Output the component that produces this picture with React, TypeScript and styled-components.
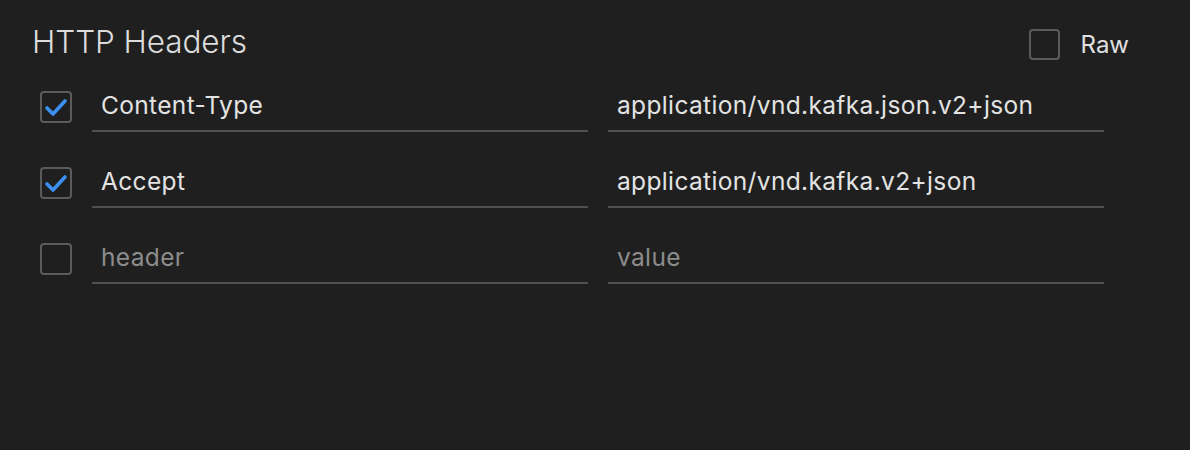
import React from "react";
import styled, { createGlobalStyle } from "styled-components";

const Global = createGlobalStyle`
  html, body { margin: 0; padding: 0; background: #1f1f1f; }
  body { font-family: Inter, "Noto Sans", sans-serif; color: #e3e3e3; }
`;

const Page = styled.div`
  width: 1190px;
  height: 450px;
  box-sizing: border-box;
  padding: 22px 0 0 32px;
  background: #1f1f1f;
`;

const Header = styled.div`
  display: flex;
  align-items: center;
  justify-content: space-between;
  width: 1098px;
  height: 44px;
`;

const Title = styled.h1`
  margin: 0 0 6px 0;
  font-size: 31.5px;
  font-weight: 300;
  color: #dcdcdc;
  letter-spacing: -0.1px;
`;

const RawToggle = styled.label`
  display: flex;
  align-items: center;
  gap: 21px;
  margin-right: 1px;
  font-size: 24px;
  color: #e0e0e0;
`;

const Box = styled.span<{ $size: number }>`
  display: inline-flex;
  align-items: center;
  justify-content: center;
  width: ${(p) => p.$size}px;
  height: ${(p) => p.$size}px;
  box-sizing: border-box;
  border: 2px solid #5b5b5b;
  border-radius: 4px;
  flex: none;
`;

const RowBox = styled(Box)`
  margin-top: 25px;
`;

const Rows = styled.div`
  display: flex;
  flex-direction: column;
  padding-left: 8px;
`;

const Row = styled.div`
  display: flex;
  align-items: flex-start;
  height: 76px;
`;

const Fields = styled.div`
  display: flex;
  gap: 20px;
  margin-left: 20px;
`;

const Field = styled.div<{ $placeholder?: boolean }>`
  width: 496px;
  height: 46px;
  margin-top: 20px;
  box-sizing: border-box;
  border-bottom: 2px solid #505050;
  padding: 0 0 6px 9px;
  display: flex;
  align-items: center;
  font-size: 24.5px;
  letter-spacing: 0.35px;
  color: ${(p) => (p.$placeholder ? "#8c8c8c" : "#e3e3e3")};
`;

const Check = () => (
  <svg width="24" height="19" viewBox="0 0 24 19">
    <path d="M3 10 L9 16 L21 3" fill="none" stroke="#3c8ff3" strokeWidth="3.6" strokeLinecap="round" strokeLinejoin="round" />
  </svg>
);

const rows = [
  { on: true, k: "Content-Type", v: "application/vnd.kafka.json.v2+json" },
  { on: true, k: "Accept", v: "application/vnd.kafka.v2+json" },
  { on: false, k: "header", v: "value", ph: true },
];

export default function App() {
  return (
    <Page>
      <Global />
      <Header>
        <Title>HTTP Headers</Title>
        <RawToggle>
          <Box $size={31} />
          Raw
        </RawToggle>
      </Header>
      <Rows>
        {rows.map((r) => (
          <Row key={r.k}>
            <RowBox $size={32}>{r.on && <Check />}</RowBox>
            <Fields>
              <Field $placeholder={r.ph}>{r.k}</Field>
              <Field $placeholder={r.ph}>{r.v}</Field>
            </Fields>
          </Row>
        ))}
      </Rows>
    </Page>
  );
}
